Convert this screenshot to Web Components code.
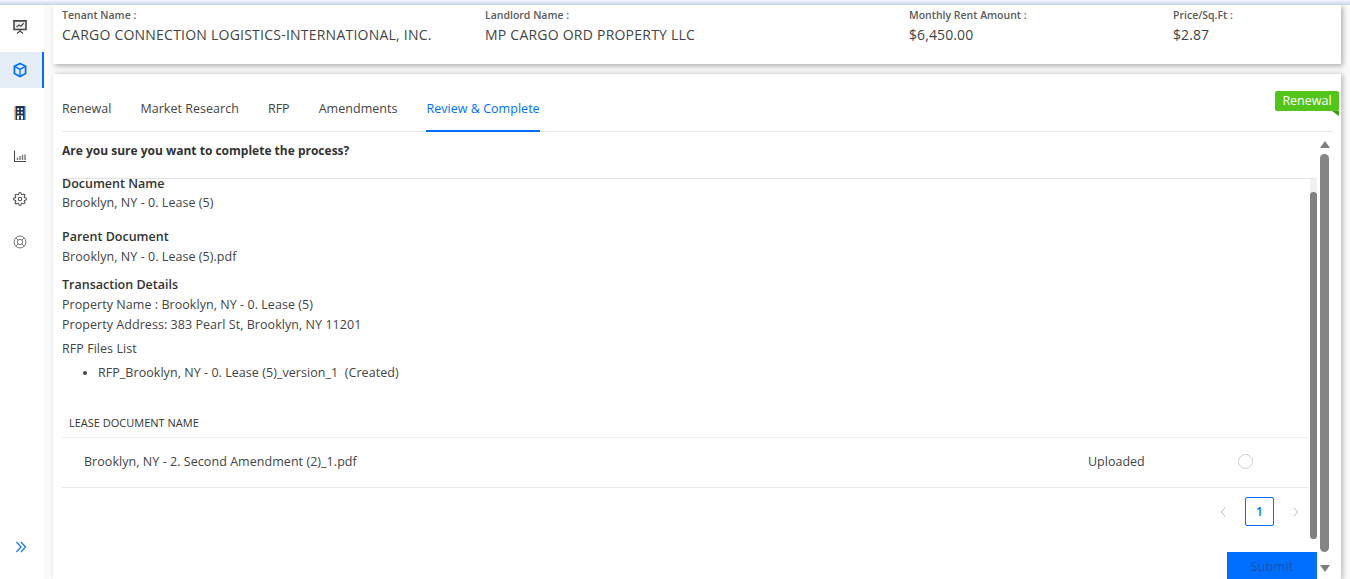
<!DOCTYPE html>
<html>
<head>
<meta charset="utf-8">
<style>
  html, body { margin: 0; height: 100%; overflow: hidden; background: #fafafa; }
  body { font-family: "Open Sans", "Liberation Sans", sans-serif; color: #3c3c3c; }
</style>
</head>
<body>
<app-shell>
  <side-nav slot="nav"></side-nav>
  <info-bar>
    <info-item style="width:423px" spacing=".23px" label="Tenant Name :" value="CARGO CONNECTION LOGISTICS-INTERNATIONAL, INC."></info-item>
    <info-item style="width:424px" spacing=".23px" label="Landlord Name :" value="MP CARGO ORD PROPERTY LLC"></info-item>
    <info-item style="width:264px" label="Monthly Rent Amount :" value="$6,450.00"></info-item>
    <info-item label="Price/Sq.Ft :" value="$2.87"></info-item>
  </info-bar>
  <process-card>
    <review-panel></review-panel>
  </process-card>
</app-shell>

<script>
class AppShell extends HTMLElement {
    constructor() {
        super();
        this.attachShadow({ mode: 'open' });
    }

    connectedCallback() {
        this.shadowRoot.innerHTML = /*html*/`
        <style>
            :host { display: flex; height: 579px; width: 1350px; overflow: hidden; position: relative; }
            .topline {
                position: absolute; left: 0; top: 0; right: 0; height: 5px; z-index: 5;
                background: linear-gradient(#f4f6fb, #c6d1e8);
            }
            .main { flex: 1; display: flex; flex-direction: column; gap: 10px; padding: 5px 9px 0 9px; min-width: 0; }
        </style>
        <div class="topline"></div>
        <slot name="nav"></slot>
        <div class="main"><slot></slot></div>
        `;
    }
}
customElements.define('app-shell', AppShell);

class SideNav extends HTMLElement {
    constructor() {
        super();
        this.attachShadow({ mode: 'open' });
    }

    connectedCallback() {
        const s = 'fill="none" stroke="#4a4a4a" stroke-width="1.1"';
        this.shadowRoot.innerHTML = /*html*/`
        <style>
            :host { display: flex; flex-direction: column; width: 44px; flex: none; background: #fff; padding-top: 5px; box-sizing: border-box; }
            .item { height: 36px; margin-bottom: 7px; display: flex; align-items: center; justify-content: center; box-sizing: border-box; padding-right: 5px; }
            .item.active { background: #e5edf7; border-right: 2px solid #006eff; padding-right: 3px; }
            svg { width: 16px; height: 16px; display: block; }
            .expand { margin-top: auto; height: 38px; display: flex; justify-content: center; padding-right: 3px; }
            .expand svg { width: 12px; height: 12px; }
        </style>
        <div class="item" style="margin-top:4px"><svg viewBox="0 0 16 16" ${s}><path d="M1 1.5h14" stroke-width="1"/><rect x="2" y="2" width="12" height="8.5" stroke-width="1.6" fill="#eee"/><path d="M4.5 8l2.5-2 2 1.2 2.8-3" stroke-width="1.2"/><path d="M8 10.5v2.5M5 14.5l3-2.5 3 2.5" stroke-width="1.3"/></svg></div>
        <div class="item active"><svg viewBox="0 0 16 16" fill="none" stroke="#006eff" stroke-width="1.7"><path d="M8 1.5l5.6 2.7v7.2L8 14.5l-5.600-3.100V4.200z"/><path d="M2.600 4.400L8 7.400l5.400-3M8 7.400v6.800" stroke-width="1.3"/></svg></div>
        <div class="item"><svg viewBox="0 0 16 16"><rect x="2.500" y="1" width="1.500" height="14" fill="#d98336"/><rect x="12" y="1" width="1.500" height="14" fill="#2f6fd0"/><rect x="4" y="1" width="8" height="14" fill="#26344a"/><path d="M5.300 3.200h1.800V5H5.300zM8.900 3.200h1.800V5H8.900zM5.300 6.800h1.800v1.800H5.300zM8.900 6.800h1.800v1.800H8.900z" fill="#fff"/><rect x="5" y="10.500" width="6" height="4" fill="#fff"/><rect x="7.100" y="11" width="1.800" height="4" fill="#26344a"/></svg></div>
        <div class="item"><svg viewBox="0 0 16 16" ${s}><path d="M2.500 2.500v11h11.500" stroke-width="1.100"/><path d="M5.500 12V9.500M8 12V8M10.500 12V7M13 12V6.500" stroke="#777" stroke-width="1.400"/></svg></div>
        <div class="item"><svg viewBox="0 0 24 24" style="width:14px;height:14px" fill="none" stroke="#4a4a4a" stroke-width="1.8"><circle cx="12" cy="12" r="3"/><path d="M19.4 15a1.65 1.65 0 0 0 .33 1.82l.06.06a2 2 0 0 1 0 2.83 2 2 0 0 1-2.83 0l-.06-.06a1.65 1.65 0 0 0-1.82-.33 1.65 1.65 0 0 0-1 1.51V21a2 2 0 0 1-2 2 2 2 0 0 1-2-2v-.09A1.65 1.65 0 0 0 9 19.4a1.65 1.65 0 0 0-1.82.33l-.06.06a2 2 0 0 1-2.83 0 2 2 0 0 1 0-2.83l.06-.06a1.65 1.65 0 0 0 .33-1.82 1.65 1.65 0 0 0-1.51-1H3a2 2 0 0 1-2-2 2 2 0 0 1 2-2h.09A1.65 1.65 0 0 0 4.6 9a1.65 1.65 0 0 0-.33-1.82l-.06-.06a2 2 0 0 1 0-2.83 2 2 0 0 1 2.83 0l.06.06a1.65 1.65 0 0 0 1.82.33H9a1.65 1.65 0 0 0 1-1.51V3a2 2 0 0 1 2-2 2 2 0 0 1 2 2v.09a1.65 1.65 0 0 0 1 1.51 1.65 1.65 0 0 0 1.82-.33l.06-.06a2 2 0 0 1 2.83 0 2 2 0 0 1 0 2.83l-.06.06a1.65 1.65 0 0 0-.33 1.82V9a1.65 1.65 0 0 0 1.51 1H21a2 2 0 0 1 2 2 2 2 0 0 1-2 2h-.09a1.65 1.65 0 0 0-1.51 1z"/></svg></div>
        <div class="item"><svg viewBox="0 0 16 16" style="width:14px;height:14px" fill="none" stroke="#707070" stroke-width="1.1"><circle cx="8" cy="8" r="6.8"/><circle cx="8" cy="8" r="3"/><path d="M3.200 3.200l2.700 2.700M12.800 3.200l-2.700 2.700M3.200 12.800l2.700-2.700M12.800 12.800l-2.700-2.700"/></svg></div>
        <div class="expand"><svg viewBox="0 0 12 12" fill="none" stroke="#1a7bf2" stroke-width="1.3"><path d="M1.500 1L6 6l-4.500 5M6 1l4.500 5L6 11"/></svg></div>
        `;
    }
}
customElements.define('side-nav', SideNav);

class InfoBar extends HTMLElement {
    constructor() {
        super();
        this.attachShadow({ mode: 'open' });
        this.shadowRoot.innerHTML = /*html*/`
        <style>
            :host { display: flex; flex: none; height: 59px; background: #fff; padding: 4px 9px 0; box-sizing: border-box; box-shadow: 2px 2px 5px rgba(0,0,0,.3); }
        </style>
        <slot></slot>
        `;
    }
}
customElements.define('info-bar', InfoBar);

class InfoItem extends HTMLElement {
    constructor() {
        super();
        this.attachShadow({ mode: 'open' });
    }

    connectedCallback() {
        this.shadowRoot.innerHTML = /*html*/`
        <style>
            :host { display: block; flex: none; }
            .label { font-size: 10.5px; font-weight: 600; color: #5a5a5a; line-height: 13px; }
            .value { font-size: 14px; color: #444; line-height: 19px; margin-top: 3px; letter-spacing: ${this.getAttribute('spacing') || '.1px'}; }
        </style>
        <div class="label">${this.getAttribute('label')}</div>
        <div class="value">${this.getAttribute('value')}</div>
        `;
    }
}
customElements.define('info-item', InfoItem);

class ProcessCard extends HTMLElement {
    constructor() {
        super();
        this.attachShadow({ mode: 'open' });
        const tabs = ['Renewal', 'Market Research', 'RFP', 'Amendments', 'Review &amp; Complete'];
        this.shadowRoot.innerHTML = /*html*/`
        <style>
            :host { display: block; flex: 1; min-height: 0; background: #fff; position: relative; padding: 0 9px; box-shadow: 2px 0 5px rgba(0,0,0,.26); }
            nav { display: flex; gap: 29px; height: 58px; align-items: flex-end; border-bottom: 1px solid #e8e8e8; margin-right: -1px; box-sizing: border-box; }
            nav span { font-size: 12.5px; letter-spacing: .03px; line-height: 18px; padding-bottom: 12px; color: #444; border-bottom: 2px solid transparent; margin-bottom: -1px; }
            nav span.active { color: #006eff; border-bottom-color: #006eff; }
            .badge {
                position: absolute; left: 1222px; top: 17px; width: 64px; height: 20px;
                background: #52c41a; color: #fff; font-size: 12.5px; line-height: 20px; text-align: center; border-radius: 2px;
            }
            .badge::after {
                content: ''; position: absolute; right: 0; bottom: -5px;
                border-top: 5px solid #3c9a12; border-left: 7px solid transparent;
            }
        </style>
        <nav>${tabs.map((t, i) => `<span class="${i === 4 ? 'active' : ''}">${t}</span>`).join('')}</nav>
        <div class="badge">Renewal</div>
        <slot></slot>
        `;
    }
}
customElements.define('process-card', ProcessCard);

class ReviewPanel extends HTMLElement {
    constructor() {
        super();
        this.attachShadow({ mode: 'open' });
    }

    connectedCallback() {
        this.shadowRoot.innerHTML = /*html*/`
        <style>
            :host { display: block; position: relative; font-size: 12.5px; color: #444; height: 447px; overflow: hidden; }
            .ask { font-weight: 700; color: #333; line-height: 17px; padding-top: 10px; height: 46px; box-sizing: border-box; font-size: 12px; }
            .inner { position: relative; border-top: 1px solid #e3e3e3; width: 1254px; height: 400px; }
            h4 { margin: 0; font-size: 12.5px; font-weight: 600; color: #333; line-height: 17px; }
            p { margin: 0; line-height: 20px; letter-spacing: .05px; }
            .doc { margin-top: -4px; }
            ul { margin: 4px 0 0; padding: 0 0 0 36px; line-height: 20px; letter-spacing: .05px; }
            .tablehead { font-size: 11px; color: #333; margin-top: 31px; padding: 0 7px; line-height: 17px; height: 24px; box-sizing: border-box; border-bottom: 1px solid #eee; margin-right: 8px; }
            .row { display: flex; align-items: center; height: 50px; border-bottom: 1px solid #e8e8e8; margin-right: 8px; box-sizing: border-box; padding: 0 0 2px 22px; }
            .row .name { width: 1004px; letter-spacing: .05px; }
            .row .state { width: 150px; }
            .radio { width: 13px; height: 13px; border: 1px solid #ccc; border-radius: 50%; }
            .pager { display: flex; align-items: center; justify-content: flex-end; gap: 16px; margin-right: 14px; margin-top: 9px; height: 29px; }
            .pager svg { width: 12px; height: 12px; }
            .pager b { font-weight: 600; width: 27px; height: 27px; border: 1px solid #006eff; border-radius: 2px; color: #006eff; font-size: 12px; line-height: 27px; text-align: center; }
            .submit { position: absolute; left: 1165px; top: 373px; width: 90px; height: 30px; background: #006eff; color: #1a56a8; font-size: 13px; text-align: center; line-height: 28px; }
            .bar { position: absolute; background: #858585; border-radius: 5px; }
            .bar.in { left: 1248px; top: 13px; width: 7px; height: 347px; background: #808080; }
            .track { position: absolute; left: 1248px; top: 0; width: 7px; height: 360px; background: #eef1ee; }
            .bar.out { left: 1258px; top: 22px; width: 9px; height: 398px; }
            .tri { position: absolute; left: 1258px; width: 0; height: 0; border-left: 5px solid transparent; border-right: 5px solid transparent; }
            .tri.up { top: 9px; border-bottom: 7px solid #7f7f7f; }
            .tri.down { top: 433px; border-top: 7px solid #7f7f7f; }
        </style>
        <div class="ask">Are you sure you want to complete the process?</div>
        <div class="inner">
            <div class="track"></div>
            <div class="bar in"></div>
            <div class="doc">
                <h4>Document Name</h4>
                <p style="margin-top:1px">Brooklyn, NY - 0. Lease (5)</p>
                <h4 style="margin-top:15px">Parent Document</h4>
                <p style="margin-top:2px;margin-bottom:9px">Brooklyn, NY - 0. Lease (5).pdf</p>
                <h4>Transaction Details</h4>
                <p style="margin-top:2px">Property Name : Brooklyn, NY - 0. Lease (5)</p>
                <p>Property Address: 383 Pearl St, Brooklyn, NY 11201</p>
                <p style="margin-top:4px">RFP Files List</p>
                <ul><li>RFP_Brooklyn, NY - 0. Lease (5)_version_1 &nbsp;(Created)</li></ul>
            </div>
            <div class="tablehead">LEASE DOCUMENT NAME</div>
            <div class="row"><span class="name">Brooklyn, NY - 2. Second Amendment (2)_1.pdf</span><span class="state">Uploaded</span><span class="radio"></span></div>
            <div class="pager">
                <svg viewBox="0 0 12 12" fill="none" stroke="#bbb" stroke-width="1"><path d="M8.500 1.500L4 6l4.500 4.500"/></svg>
                <b>1</b>
                <svg viewBox="0 0 12 12" fill="none" stroke="#bbb" stroke-width="1"><path d="M3.500 1.500L8 6l-4.500 4.500"/></svg>
            </div>
            <div class="submit">Submit</div>
        </div>
        <div class="tri up"></div>
        <div class="bar out"></div>
        <div class="tri down"></div>
        `;
    }
}
customElements.define('review-panel', ReviewPanel);
</script>
</body>
</html>
